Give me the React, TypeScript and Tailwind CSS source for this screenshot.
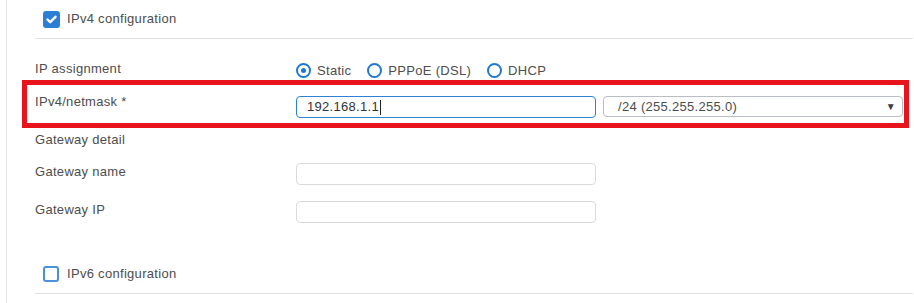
function Checkbox({ checked }: { checked: boolean }) {
  if (checked) {
    return (
      <span className="flex h-[17px] w-[17px] items-center justify-center rounded-[3px] bg-[#2b7fd4]">
        <svg width="11" height="9" viewBox="0 0 11 9" fill="none">
          <path d="M1.5 4.5 L4.2 7.2 L9.5 1.8" stroke="#fff" strokeWidth="2.4" strokeLinecap="round" strokeLinejoin="round" />
        </svg>
      </span>
    );
  }
  return <span className="block h-[16px] w-[16px] rounded-[3px] border-2 border-[#4a90dc] bg-white" />;
}

function Radio({ checked, label }: { checked: boolean; label: string }) {
  return (
    <label className="flex items-center gap-[6px]">
      <span className="flex h-[15px] w-[15px] items-center justify-center rounded-full border-2 border-[#1f78d1] bg-white">
        {checked ? <span className="h-[5px] w-[5px] rounded-full bg-[#1f78d1]" /> : null}
      </span>
      <span>{label}</span>
    </label>
  );
}

export default function App() {
  return (
    <div
      className="flex h-[303px] w-[914px] overflow-hidden bg-white text-[13px] leading-4 tracking-[0.3px] text-[#4d4d4d]"
      style={{ fontFamily: '"Liberation Sans", Arial, sans-serif' }}
    >
      <div className="w-[6px] shrink-0 bg-white" />
      <div className="flex flex-1 flex-col border-l border-[#e6e6e6]">
        {/* IPv4 section header */}
        <div className="flex h-[38px] items-center gap-[7px] pl-[36px]">
          <Checkbox checked />
          <span>IPv4 configuration</span>
        </div>
        <div className="ml-[28px] mr-[1px] h-px bg-[#dedede]" />

        {/* IP assignment */}
        <div className="mt-[19px] flex h-[22px] items-center pl-[28px]">
          <span className="w-[261px]">IP assignment</span>
          <div className="mt-[3px] flex items-center gap-[16px]">
            <Radio checked label="Static" />
            <Radio checked={false} label="PPPoE (DSL)" />
            <Radio checked={false} label="DHCP" />
          </div>
        </div>

        {/* highlighted netmask row */}
        <div className="ml-[15px] h-[48px] w-[887px] border-[5px] border-[#e8141c]">
          <div className="flex items-start pl-[8px] pt-[8px]">
            <span className="w-[261px] pt-[1px]">IPv4/netmask *</span>
            <div className="mt-[3px] flex gap-[7px]">
              <div className="flex h-[22px] w-[300px] items-center rounded-[4px] border border-[#2d82d6] px-[10px] text-[#333]">
                <span>192.168.1.1</span>
                <span className="ml-px h-[15px] w-px bg-[#222]" />
              </div>
              <div className="flex h-[21px] w-[300px] items-center justify-between rounded-[4px] border border-[#b9bec4] pl-[14px] pr-[6px]">
                <span>/24 (255.255.255.0)</span>
                <span className="text-[10px] text-[#3a3f45]">▼</span>
              </div>
            </div>
          </div>
        </div>

        {/* gateway */}
        <div className="mt-[4px] pl-[28px]">Gateway detail</div>
        <div className="mt-[15px] flex items-start pl-[28px]">
          <span className="w-[261px] pt-px">Gateway name</span>
          <div className="h-[22px] w-[300px] rounded-[4px] border border-[#d8dbde]" />
        </div>
        <div className="mt-[16px] flex items-start pl-[28px]">
          <span className="w-[261px] pt-px">Gateway IP</span>
          <div className="h-[22px] w-[300px] rounded-[4px] border border-[#d8dbde]" />
        </div>

        {/* IPv6 section header */}
        <div className="mt-[43px] flex h-[16px] items-center gap-[8px] pl-[36px]">
          <Checkbox checked={false} />
          <span>IPv6 configuration</span>
        </div>
        <div className="ml-[28px] mr-[1px] mt-[11px] h-px bg-[#dedede]" />
      </div>
    </div>
  );
}
